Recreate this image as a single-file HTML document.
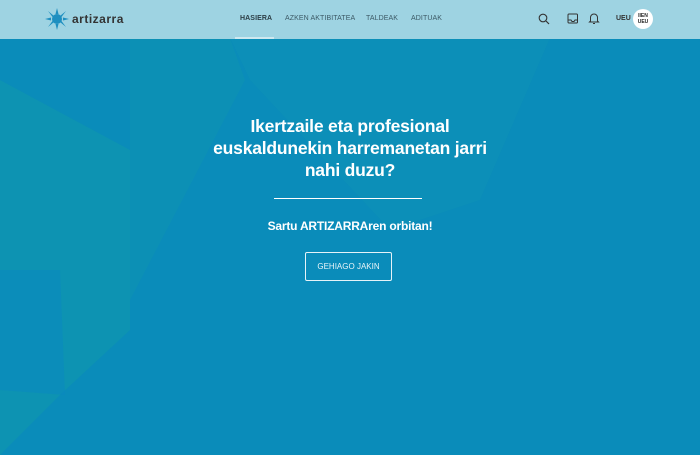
<!DOCTYPE html>
<html><head><meta charset="utf-8"><style>
*{margin:0;padding:0;box-sizing:border-box}
body{width:700px;height:455px;overflow:hidden;font-family:"Liberation Sans",sans-serif;background:#0a8cba;position:relative}
svg.bg{position:absolute;left:0;top:0}
.hdr{position:absolute;left:0;top:0;width:700px;height:39px;background:#9ed3e2}
.nav{position:absolute;top:15px;font-size:7px;color:#3d5a66;letter-spacing:.1px}
.h1{position:absolute;left:0;width:700px;top:115px;text-align:center;color:#fff;font-weight:bold;font-size:17.5px;line-height:22px;letter-spacing:-.2px}
.line{position:absolute;left:274px;top:198px;width:148px;height:1px;background:#fff}
.sub{position:absolute;left:0;width:700px;top:219px;text-align:center;color:#fff;font-weight:bold;font-size:12px;letter-spacing:-.2px}
.btn{position:absolute;left:305px;top:252px;width:87px;height:29px;border:1px solid #e6f3f8;border-radius:2px;color:#e8f4f8;font-size:8px;text-align:center;line-height:27px}
</style></head><body>
<svg class="bg" width="700" height="455">
<polygon points="130,38 230,38 245,80 130,300" fill="#0d92b2" opacity=".6"/>
<polygon points="0,80 130,150 130,330 60,395 0,455" fill="#0e95b0" opacity=".8"/>
<polygon points="230,38 550,38 480,200 390,230 250,80" fill="#0d91b5" opacity=".5"/>
<polygon points="0,270 60,270 65,395 0,390" fill="#0a88c0" opacity=".6"/>
</svg>
<div class="hdr"></div>
<svg style="position:absolute;left:45px;top:8px" width="24" height="22" viewBox="0 0 24 22"><g fill="#1e8fc0"><circle cx="12" cy="11" r="5"/><polygon points="12,0 13.5,6 10.5,6"/><polygon points="12,22 13.5,16 10.5,16"/><polygon points="0,11 6,9.5 6,12.5"/><polygon points="24,11 18,9.5 18,12.5"/><polygon points="3,3 9,8 7.5,9"/><polygon points="21,3 15,8 16.5,9"/><polygon points="3,19 9,14 7.5,13"/><polygon points="21,19 15,14 16.5,13"/></g></svg>
<div style="position:absolute;left:72px;top:12px;font-size:12px;font-weight:bold;color:#333;letter-spacing:.5px">artizarra</div>
<div class="nav" style="left:240px;color:#2c3e46;font-weight:bold">HASIERA</div>
<div style="position:absolute;left:235px;top:37px;width:39px;height:2px;background:#cfe8ef"></div>
<div class="nav" style="left:285px">AZKEN AKTIBITATEA</div>
<div class="nav" style="left:366px">TALDEAK</div>
<div class="nav" style="left:411px">ADITUAK</div>
<svg style="position:absolute;left:538px;top:13px" width="12" height="12"><circle cx="5" cy="5" r="3.8" fill="none" stroke="#333" stroke-width="1.1"/><line x1="8" y1="8" x2="11" y2="11" stroke="#333" stroke-width="1.2"/></svg>
<svg style="position:absolute;left:567px;top:13px" width="12" height="12"><rect x="1" y="1" width="9.5" height="9" rx="1" fill="none" stroke="#333" stroke-width="1"/><path d="M1 7h3l1 1.5h2l1-1.5h3" fill="none" stroke="#333" stroke-width="1"/></svg>
<svg style="position:absolute;left:588px;top:12px" width="12" height="13"><path d="M2.5 9V5.5a3.5 3.5 0 0 1 7 0V9l1 1H1.5z" fill="none" stroke="#333" stroke-width="1"/><path d="M5 11.5h2" stroke="#333"/></svg>
<div style="position:absolute;left:616px;top:15px;font-size:7px;font-weight:bold;color:#333">UEU</div>
<div style="position:absolute;left:633px;top:9px;width:20px;height:20px;border-radius:50%;background:#fff;font-size:5px;font-weight:bold;text-align:center;line-height:6px;padding-top:4px;color:#222">IIEN<br>UEU</div>
<div class="h1">Ikertzaile eta profesional<br>euskaldunekin harremanetan jarri<br>nahi duzu?</div>
<div class="line"></div>
<div class="sub">Sartu ARTIZARRAren orbitan!</div>
<div class="btn">GEHIAGO JAKIN</div>
</body></html>
